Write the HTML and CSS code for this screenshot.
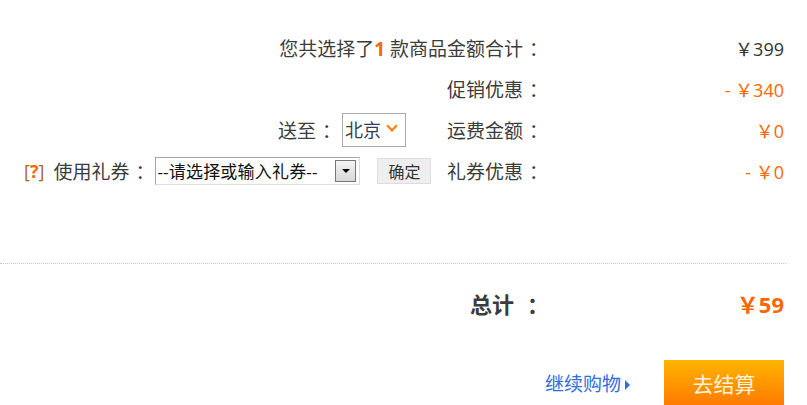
FILE: index.html
```html
<!DOCTYPE html>
<html lang="zh-CN">
<head>
<meta charset="UTF-8" />
<meta name="viewport" content="width=device-width, initial-scale=1" />
<title>购物车结算</title>
<link rel="stylesheet" href="styles.css">
</head>
<body>
<div class="cart-summary">
    <!-- Price breakdown -->
    <div class="row">
        <span class="label">您共选择了<b class="count">1</b> 款商品金额合计<i class="colon">：</i></span>
        <span class="value">￥399</span>
    </div>
    <div class="row">
        <span class="label">促销优惠<i class="colon">：</i></span>
        <span class="value hot">- ￥340</span>
    </div>
    <div class="row">
        <span class="ship-to">送至<i class="colon">：</i></span>
        <div class="city">北京<span class="chev"></span></div>
        <span class="label">运费金额<i class="colon">：</i></span>
        <span class="value hot">￥0</span>
    </div>
    <div class="row">
        <div class="coupon">
            <span class="help">[<em>?</em>]</span>
            <span class="coupon-title">使用礼券<i class="colon">：</i></span>
            <div class="coupon-select">
                <span class="coupon-text">--请选择或输入礼券--</span>
                <span class="drop"><i></i></span>
            </div>
            <button class="confirm">确定</button>
        </div>
        <span class="label">礼券优惠<i class="colon">：</i></span>
        <span class="value hot">- ￥0</span>
    </div>

    <div class="divider"></div>

    <div class="row total">
        <span class="label">总计<i class="colon">：</i></span>
        <span class="value hot">￥59</span>
    </div>

    <div class="actions">
        <a class="go-on" href="#">继续购物</a>
        <button class="checkout">去结算</button>
    </div>
</div>
</body>
</html>
```

FILE: styles.css
```css
body {
margin: 0;
font-family: "Open Sans", "Noto Sans CJK SC", sans-serif;
font-size: 19px;
color: #3c3c3c;
background: #fff;
}
.cart-summary {
padding: 27px 21px 0 0;
}
.row {
display: flex;
justify-content: flex-end;
align-items: center;
height: 41px;
}
.label,
.ship-to,
.coupon-title {
white-space: nowrap;
flex-shrink: 0;
}
.label {
text-align: right;
}
/* full-width colon sits in the middle of its cell */
.colon {
font-style: normal;
padding-left: 6px;
margin-right: -6px;
}
.value {
width: 244px;
flex-shrink: 0;
padding-right: 2px;
box-sizing: border-box;
text-align: right;
font-size: 18px;
color: #333;
}
.hot {
color: #ff6600;
}
.count {
color: #ff6600;
font-weight: bold;
}
/* Delivery city picker */
.ship-to {
margin-right: 7px;
}
.city {
width: 64px;
height: 34px;
flex-shrink: 0;
box-sizing: border-box;
border: 1px solid #aaa;
padding-left: 2px;
line-height: 32px;
font-size: 18px;
color: #333c55;
margin-right: 41px;
}
.chev {
display: inline-block;
width: 6px;
height: 6px;
border-right: 2px solid #ff7a00;
border-bottom: 2px solid #ff7a00;
transform: rotate(45deg);
margin-left: 7px;
vertical-align: 7px;
}
/* Coupon */
.coupon {
display: flex;
align-items: center;
margin-right: auto;
padding-left: 24px;
}
.help {
color: #b0631c;
font-size: 18px;
margin-right: 9px;
white-space: nowrap;
}
.help em {
font-style: normal;
font-weight: bold;
color: #ff6600;
}
.coupon-title {
margin-right: 7px;
}
.coupon-select {
display: flex;
align-items: center;
justify-content: space-between;
width: 205px;
height: 28px;
flex-shrink: 0;
box-sizing: border-box;
border: 1px solid #a5a5a5;
border-right-color: #ddd;
border-bottom-color: #ddd;
padding: 0 3px 0 1px;
color: #111;
}
.coupon-text {
font-size: 17px;
letter-spacing: 0.2px;
}
.drop {
width: 21px;
height: 22px;
box-sizing: border-box;
border: 1px solid #777;
background: linear-gradient(#f4f4f4, #d8d8d8);
display: flex;
align-items: center;
justify-content: center;
}
.drop i {
border-left: 4px solid transparent;
border-right: 4px solid transparent;
border-top: 4px solid #000;
}
.confirm {
margin-left: 17px;
width: 54px;
height: 26px;
flex-shrink: 0;
padding: 0;
border: 1px solid #ddd;
background: #eee;
font-family: inherit;
font-size: 16px;
color: #333;
}
.divider {
margin-top: 72px;
border-top: 1px dotted #c8c8c8;
}
.total {
margin-top: 19px;
height: 40px;
font-size: 22px;
font-weight: bold;
}
.total .colon {
padding-left: 13px;
margin-right: -7px;
}
.total .value {
font-size: 22px;
color: #ff6600;
}
/* Bottom buttons */
.actions {
display: flex;
justify-content: flex-end;
align-items: center;
margin-top: 37px;
}
.go-on {
color: #2f6de0;
text-decoration: none;
font-size: 19px;
margin-right: 34px;
}
.go-on::after {
content: "";
display: inline-block;
border-top: 5px solid transparent;
border-bottom: 5px solid transparent;
border-left: 5px solid #2f6de0;
margin-left: 4px;
vertical-align: 1px;
}
.checkout {
width: 120px;
height: 46px;
margin-right: 2px;
border: none;
background: linear-gradient(#ffb400, #ff7a00);
color: #fff4dc;
font-family: inherit;
font-size: 21px;
padding: 0;
}
```
